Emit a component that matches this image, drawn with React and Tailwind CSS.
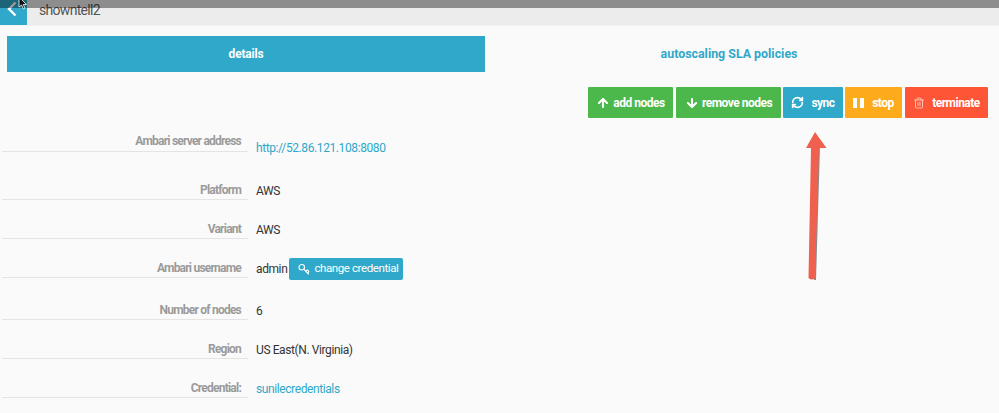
import React from "react";
import { ArrowUp, ArrowDown, RefreshCw, Trash2, Key } from "lucide-react";

const rows = [
  { label: "Ambari server address", h: "h-[34px]", value: <a className="text-[#2fa8c9] relative top-[5px]">http://52.86.121.108:8080</a>, alignTop: true },
  { label: "Platform", h: "h-[48px]", value: <span>AWS</span> },
  { label: "Variant", h: "h-[39px]", value: <span>AWS</span> },
  {
    label: "Ambari username",
    h: "h-[39px]",
    value: (
      <span className="flex items-center gap-[2px]">
        <span>admin</span>
        <span className="flex items-center gap-[4px] h-[22px] w-[114px] pl-[9px] bg-[#2fa8c9] rounded-[2px] text-white text-[11.5px] tracking-[-0.4px]">
          <Key size={12} strokeWidth={2.2} className="-scale-y-100" />
          change credential
        </span>
      </span>
    ),
  },
  { label: "Number of nodes", h: "h-[42px]", value: <span>6</span> },
  { label: "Region", h: "h-[39px]", value: <span>US East(N. Virginia)</span> },
  { label: "Credential:", h: "h-[39px]", value: <a className="text-[#2fa8c9]">sunilecredentials</a> },
];

function Btn({ w, bg, icon, gap, children }) {
  return (
    <div className={`${w} ${bg} h-[31px] flex items-center justify-center ${gap} text-white font-bold text-[12px] tracking-[-0.5px] rounded-[1px]`}>
      {icon}
      <span>{children}</span>
    </div>
  );
}

export default function App() {
  return (
    <div className="relative w-[999px] h-[413px] overflow-hidden bg-[#fafafa] font-['Roboto',sans-serif] text-[12px] text-[#333]">
      <div className="absolute top-0 left-0 right-0 h-[8px] bg-black/40 z-10" />
      <svg className="absolute left-[18px] top-[-3px] z-20" width="10" height="13" viewBox="0 0 10 13">
        <path d="M1 0 L1 10 L3.5 8 L5.5 12 L7 11 L5.2 7.5 L8.5 7.5 Z" fill="#111" stroke="#fff" strokeWidth="0.8" />
      </svg>
      <header className="h-[25px] bg-[#ececec] flex items-stretch">
        <div className="w-[27px] bg-[#2fa8c9] text-white">
          <svg width="27" height="25" viewBox="0 0 27 25" fill="none" stroke="#fff" strokeWidth="2.4">
            <path d="M15.5 2.5 L9 9 L15.5 15.5" />
          </svg>
        </div>
        <div className="pl-[12px] text-[14px] leading-[20px] tracking-[-0.7px] text-[#555]">showntell2</div>
      </header>
      <div className="h-px bg-[#f3f3f3]" />

      <div className="flex pl-[7px] pr-[26px] pt-[10px]">
        <div className="w-[478px] h-[36px] bg-[#2fa8c9] text-white font-bold tracking-[-0.2px] flex items-center justify-center">details</div>
        <div className="flex-1 h-[36px] text-[#2fa8c9] font-bold text-[12.4px] flex items-center justify-center">autoscaling SLA policies</div>
      </div>

      <div className="flex justify-end pr-[11px] pt-[15px]">
        <Btn w="w-[85px] mr-[3px]" bg="bg-[#4cb84c]" gap="gap-[3px]" icon={<ArrowUp size={14} strokeWidth={3.5} />}>add nodes</Btn>
        <Btn w="w-[105px] mr-[2px]" bg="bg-[#4cb84c]" gap="gap-[3px]" icon={<ArrowDown size={14} strokeWidth={3.5} />}>remove nodes</Btn>
        <Btn w="w-[60px] mr-[2px]" bg="bg-[#2fa8c9]" gap="gap-[7px]" icon={<RefreshCw size={13} strokeWidth={3} />}>sync</Btn>
        <Btn w="w-[57px] mr-[3px]" bg="bg-[#fdab1a]" gap="gap-[8px]" icon={<svg width="11" height="12" viewBox="0 0 11 12" fill="#fff"><rect x="0" y="1" width="4" height="10" /><rect x="7" y="1" width="4" height="10" /></svg>}>stop</Btn>
        <Btn w="w-[83px]" bg="bg-[#ff5537]" gap="gap-[7px]" icon={<Trash2 size={12} strokeWidth={2} className="text-[#ffc0b0]" />}>terminate</Btn>
      </div>

      <div>
        {rows.map((r) => (
          <div key={r.label} className={`flex ${r.h} items-end`}>
            <div className="w-[246px] ml-[2px] h-full flex items-end justify-end pr-[7px] border-b border-[#e4e4e4] text-[#9a9a9a] font-bold text-[12px] tracking-[-0.78px]">
              <span className={r.alignTop ? "relative top-[-1px]" : ""}>{r.label}</span>
            </div>
            <div className="pl-[8px] h-[18px] flex items-center text-[#333] tracking-[-0.4px]">{r.value}</div>
          </div>
        ))}
      </div>

      <svg className="absolute left-[795px] top-[128px]" width="40" height="156" viewBox="0 0 40 156">
        <path d="M23 19 L25 19 L21 152 L19 152 Z" fill="#6e6e6e" opacity="0.8" />
        <path d="M20 4 L31.5 20 L24 20 L20 150 Q17 153 13.5 150 L16 20 L11 20 Z" fill="#f0604f" />
      </svg>
    </div>
  );
}
